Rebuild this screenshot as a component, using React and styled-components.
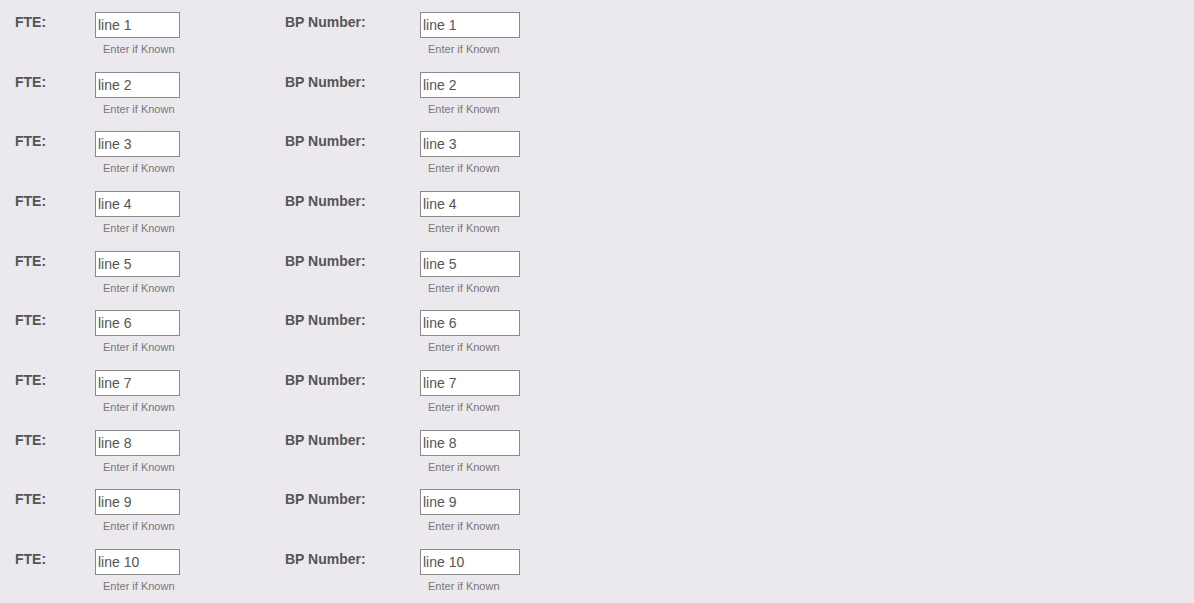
import React from "react";
import styled, { createGlobalStyle } from "styled-components";

const GlobalStyle = createGlobalStyle`
  html, body {
    margin: 0;
    padding: 0;
    background: #ebe9ee;
    font-family: "Liberation Sans", Arial, sans-serif;
  }
`;

const Page = styled.div`
  padding: 12px 0 0 15px;
  min-height: 603px;
  box-sizing: border-box;
`;

const Row = styled.div`
  display: flex;
  align-items: flex-start;
  height: 59.67px;
`;

const Field = styled.div`
  display: flex;
  align-items: flex-start;
  width: ${(p) => p.width}px;
`;

const Label = styled.label`
  width: ${(p) => p.width}px;
  flex-shrink: 0;
  padding-top: 2px;
  font-size: 14px;
  font-weight: bold;
  color: #555;
`;

const InputWrap = styled.div`
  display: flex;
  flex-direction: column;
`;

const Input = styled.input`
  box-sizing: border-box;
  width: ${(p) => p.width}px;
  height: 26px;
  margin: 0;
  padding: 0 2px;
  border: 1px solid #8a8a8a;
  background: #fff;
  font-family: "Liberation Sans", Arial, sans-serif;
  font-size: 14px;
  color: #555;
  outline: none;
`;

const Hint = styled.span`
  margin-top: 5px;
  padding-left: 8px;
  font-size: 11px;
  color: #777;
`;

const lines = Array.from({ length: 10 }, (_, i) => `line ${i + 1}`);

export default function App() {
  return (
    <>
      <GlobalStyle />
      <Page>
        {lines.map((line) => (
          <Row key={line}>
            <Field width={270}>
              <Label width={80}>FTE:</Label>
              <InputWrap>
                <Input width={85} defaultValue={line} />
                <Hint>Enter if Known</Hint>
              </InputWrap>
            </Field>
            <Field width={240}>
              <Label width={135}>BP Number:</Label>
              <InputWrap>
                <Input width={100} defaultValue={line} />
                <Hint>Enter if Known</Hint>
              </InputWrap>
            </Field>
          </Row>
        ))}
      </Page>
    </>
  );
}
